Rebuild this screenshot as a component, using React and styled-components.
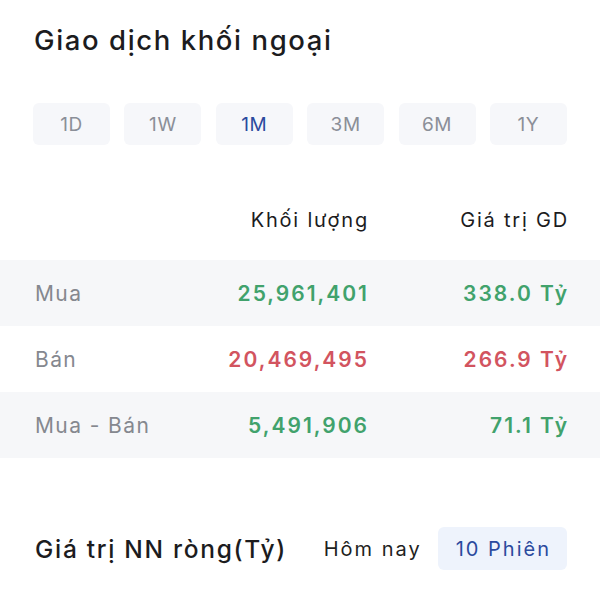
import React, { useState } from "react";
import styled, { createGlobalStyle } from "styled-components";

const GlobalStyle = createGlobalStyle`
  body {
    margin: 0;
    background: #ffffff;
    font-family: Inter, "Noto Sans", sans-serif;
  }
`;

const Page = styled.div`
  width: 600px;
  height: 600px;
  overflow: hidden;
  background: #fff;
`;

const Title = styled.h1`
  margin: 0;
  padding: 23px 33px 0 34px;
  font-size: 27.5px;
  line-height: 34px;
  font-weight: 500;
  letter-spacing: 1.6px;
  color: #1c1c1e;
`;

const Periods = styled.div`
  display: grid;
  grid-template-columns: repeat(6, 77px);
  justify-content: space-between;
  margin: 46px 33px 0;
`;

const PeriodButton = styled.button`
  height: 42px;
  border: none;
  border-radius: 6px;
  background: #f6f7fa;
  font-family: inherit;
  font-size: 19px;
  font-weight: 400;
  letter-spacing: 0.6px;
  color: ${(p) => (p.active ? "#2b4a9e" : "#8b8f98")};
  cursor: pointer;
  padding: 0;
`;

const Row = styled.div`
  display: grid;
  grid-template-columns: 1fr 200px 200px;
  align-items: center;
  padding: 0 31px 0 35px;
  height: ${(p) => (p.header ? "auto" : "66px")};
  background: ${(p) => (p.shaded ? "#f6f7f9" : "#fff")};
`;

const HeaderRow = styled(Row)`
  margin-top: 63px;
  padding-bottom: 28px;
`;

const HeadCell = styled.div`
  font-size: 20px;
  line-height: 24px;
  letter-spacing: 1.8px;
  color: #1c1c1e;
  text-align: right;
`;

const Label = styled.div`
  font-size: 21px;
  letter-spacing: 1.4px;
  color: #85888f;
`;

const Value = styled.div`
  font-size: 21px;
  font-weight: 600;
  letter-spacing: 2px;
  text-align: right;
  color: ${(p) => (p.tone === "down" ? "#d2545f" : "#41a26c")};
`;

const NetSection = styled.div`
  display: flex;
  align-items: center;
  justify-content: space-between;
  margin: 69px 33px 0 35px;
`;

const NetTitle = styled.h2`
  margin: 0;
  font-size: 24.5px;
  font-weight: 500;
  letter-spacing: 1.7px;
  color: #1c1c1e;
`;

const Toggle = styled.div`
  display: flex;
`;

const ToggleButton = styled.button`
  height: 43px;
  padding: 0 16px 0 18px;
  border: none;
  border-radius: 6px;
  font-family: inherit;
  font-size: 20px;
  letter-spacing: 2px;
  background: ${(p) => (p.active ? "#eef3fc" : "transparent")};
  color: ${(p) => (p.active ? "#2b4a9e" : "#1f1f22")};
  cursor: pointer;
`;

const periods = ["1D", "1W", "1M", "3M", "6M", "1Y"];

const rows = [
  { label: "Mua", volume: "25,961,401", value: "338.0 Tỷ", tone: "up", shaded: true },
  { label: "Bán", volume: "20,469,495", value: "266.9 Tỷ", tone: "down", shaded: false },
  { label: "Mua - Bán", volume: "5,491,906", value: "71.1 Tỷ", tone: "up", shaded: true },
];

export default function App() {
  const [period, setPeriod] = useState("1M");
  const [range, setRange] = useState("10");

  return (
    <Page>
      <GlobalStyle />
      <Title>Giao dịch khối ngoại</Title>
      <Periods>
        {periods.map((p) => (
          <PeriodButton key={p} active={p === period} onClick={() => setPeriod(p)}>
            {p}
          </PeriodButton>
        ))}
      </Periods>

      <HeaderRow header>
        <div />
        <HeadCell>Khối lượng</HeadCell>
        <HeadCell>Giá trị GD</HeadCell>
      </HeaderRow>
      {rows.map((r) => (
        <Row key={r.label} shaded={r.shaded}>
          <Label>{r.label}</Label>
          <Value tone={r.tone}>{r.volume}</Value>
          <Value tone={r.tone}>{r.value}</Value>
        </Row>
      ))}

      <NetSection>
        <NetTitle>Giá trị NN ròng(Tỷ)</NetTitle>
        <Toggle>
          <ToggleButton active={range === "today"} onClick={() => setRange("today")}>
            Hôm nay
          </ToggleButton>
          <ToggleButton active={range === "10"} onClick={() => setRange("10")}>
            10 Phiên
          </ToggleButton>
        </Toggle>
      </NetSection>
    </Page>
  );
}
